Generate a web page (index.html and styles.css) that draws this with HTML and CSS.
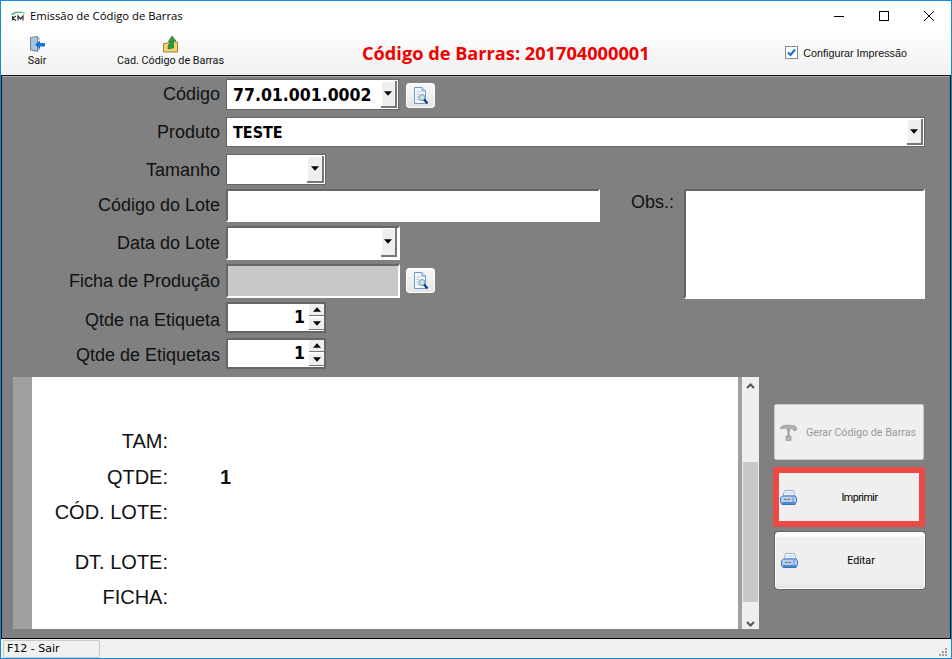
FILE: index.html

```html
<!DOCTYPE html>
<html>
<head>
    <title>Emissão de Código de Barras</title>
    <link rel="stylesheet" href="styles.css">
</head>
<body>
<!-- icons used more than once -->
<svg class="defs" width="0" height="0">
    <symbol id="ico-lookup" viewBox="0 0 16 18">
        <path d="M1.5 .5H9L12.5 4V16.5H1.5Z" fill="#f4f8fc" stroke="#6a9bd0"/>
        <path d="M9 .5V4H12.5" fill="#cfe0f2" stroke="#6a9bd0"/>
        <path d="M3.5 5H8M3.5 7.5H6M3.5 10H6M3.5 12.5H6" stroke="#b5c4d4"/>
        <circle cx="9" cy="10.5" r="3" fill="#bfe6ee" stroke="#7f9aa5"/>
        <path d="M11 12.5L14.5 16.5" stroke="#12359c" stroke-width="2.2"/>
    </symbol>
    <symbol id="ico-print" viewBox="0 0 17 15">
        <path d="M4.5 .5H13.500L15 6H3Z" fill="#fff" stroke="#8fb2da"/>
        <path d="M5.500 2.500H13M5 4H13.500" stroke="#ccd9e8"/>
        <path d="M2.500 6H15L16.500 8V11.500L15 14.500H2L.5 12.500V8Z" fill="#b4d0ee" stroke="#3a74c0"/>
        <path d="M1.500 12H16V14H2.500Z" fill="#4f88d0"/>
        <path d="M13 7V14" stroke="#5f94d6"/>
        <path d="M4 9.500H7" stroke="#2a9a3a"/>
        <path d="M8 9.500H10" stroke="#d03030"/>
    </symbol>
    <symbol id="ico-arrow" viewBox="0 0 8 4.500">
        <path d="M0 0H8L4 4.500Z" fill="#000"/>
    </symbol>
</svg>

<div class="window">
    <!-- title bar -->
    <div class="titlebar">
        <svg class="logo" width="17" height="10" viewBox="0 0 17 10">
            <path d="M.5 4C3 -.5 12 -.5 16.500 2.500C11 1.500 5 1.500 3 4Z" fill="#6fb58a"/>
            <path d="M2.500 5V9.500M2.500 7.200L6 5M2.500 7.200L6 9.500M8 9.500V5L10.500 8L13 5V9.500" fill="none" stroke="#333" stroke-width="1.200"/>
        </svg>
        <span class="win-title">Emissão de Código de Barras</span>
        <div class="win-btns">
            <svg width="10" height="10" viewBox="0 0 10 10"><path d="M0 5.5H10" stroke="#000"/></svg>
            <svg width="10" height="10" viewBox="0 0 10 10"><rect x=".5" y=".5" width="9" height="9" fill="none" stroke="#000"/></svg>
            <svg width="10" height="10" viewBox="0 0 10 10"><path d="M0 0L10 10M10 0L0 10" stroke="#000"/></svg>
        </div>
    </div>

    <!-- toolbar -->
    <div class="toolbar">
        <div class="tool tool-sair">
            <svg width="17" height="17" viewBox="0 0 17 17">
                <path d="M1.5 1.5L8.5 .5V15.5L1.5 14Z" fill="#aac4e0" stroke="#6c7fa0"/>
                <path d="M8.5 2H10V4M8.5 14H10V12" fill="none" stroke="#8a9ab0"/>
                <path d="M6 8.5L11 4.5V7H16V10.5H11V13Z" fill="#1670d8"/>
            </svg>
            <span>Sair</span>
        </div>
        <div class="tool tool-cad">
            <svg width="17" height="18" viewBox="0 0 17 18">
                <path d="M1.5 8.5H5L6 7H15.5V17H1.5Z" fill="#f3d27a" stroke="#a8842c"/>
                <path d="M6 14C6 10 7 7.5 9 6.5H6.5L10 1L14 6H11.5V13Z" fill="#2f9a35" stroke="#1c6e22" stroke-width=".6"/>
            </svg>
            <span>Cad. Código de Barras</span>
        </div>
        <h1 class="barcode-title">Código de Barras: 201704000001</h1>
        <label class="config">
            <svg width="13" height="13" viewBox="0 0 13 13">
                <rect x=".5" y=".5" width="12" height="12" fill="#fff" stroke="#8a8a8a"/>
                <path d="M3 6.5L5.5 9L10 3.5" fill="none" stroke="#0a6fd0" stroke-width="2"/>
            </svg>
            <span>Configurar Impressão</span>
        </label>
    </div>

    <!-- main panel -->
    <div class="panel">
        <div class="form">
            <label class="lbl">Código</label>
            <div class="field-line">
                <div class="combo combo-codigo"><span>77.01.001.0002</span><i class="drop"><svg width="8" height="5"><use href="#ico-arrow"/></svg></i></div>
                <button class="lookup"><svg width="16" height="18"><use href="#ico-lookup"/></svg></button>
            </div>

            <label class="lbl">Produto</label>
            <div class="combo combo-produto span-all"><span>TESTE</span><i class="drop"><svg width="8" height="5"><use href="#ico-arrow"/></svg></i></div>

            <label class="lbl down1">Tamanho</label>
            <div class="combo combo-tamanho"><span></span><i class="drop"><svg width="8" height="5"><use href="#ico-arrow"/></svg></i></div>

            <label class="lbl down1">Código do Lote</label>
            <div class="sunken lote"></div>
            <label class="lbl lbl-obs">Obs.:</label>
            <div class="sunken obs"></div>

            <label class="lbl down2">Data do Lote</label>
            <div class="sunken data"><i class="drop"><svg width="8" height="5"><use href="#ico-arrow"/></svg></i></div>

            <label class="lbl down2">Ficha de Produção</label>
            <div class="field-line">
                <div class="sunken ficha"></div>
                <button class="lookup"><svg width="16" height="18"><use href="#ico-lookup"/></svg></button>
            </div>

            <label class="lbl down3">Qtde na Etiqueta</label>
            <div class="spin">
                <span>1</span>
                <div class="spin-btns">
                    <i><svg class="up" width="8" height="5"><use href="#ico-arrow"/></svg></i>
                    <i><svg width="8" height="5"><use href="#ico-arrow"/></svg></i>
                </div>
            </div>

            <label class="lbl down2">Qtde de Etiquetas</label>
            <div class="spin">
                <span>1</span>
                <div class="spin-btns">
                    <i><svg class="up" width="8" height="5"><use href="#ico-arrow"/></svg></i>
                    <i><svg width="8" height="5"><use href="#ico-arrow"/></svg></i>
                </div>
            </div>
        </div>

        <div class="bottom">
            <!-- label preview -->
            <div class="preview">
                <div class="sheet">
                    <div class="line"><b>TAM:</b></div>
                    <div class="line"><b>QTDE:</b><em>1</em></div>
                    <div class="line"><b>CÓD. LOTE:</b></div>
                    <div class="line line-gap"><b>DT. LOTE:</b></div>
                    <div class="line"><b>FICHA:</b></div>
                </div>
                <div class="scroll">
                    <svg width="9" height="6" viewBox="0 0 9 6"><path d="M1 5L4.500 1.500L8 5" fill="none" stroke="#555" stroke-width="2"/></svg>
                    <div class="thumb"></div>
                    <svg width="9" height="6" viewBox="0 0 9 6"><path d="M1 1L4.500 4.500L8 1" fill="none" stroke="#555" stroke-width="2"/></svg>
                </div>
            </div>

            <div class="actions">
                <div class="action action-off">
                    <svg width="17" height="17" viewBox="0 0 17 17">
                        <path d="M.5 3.500C3 1 8 .5 11 1.500H14L16.500 3.500V6L14.500 7L12 4.500H10V6.500H7V4.500C5 4 3 4 .5 5Z" fill="#b0b0b0" stroke="#8c8c8c" stroke-width=".6"/>
                        <path d="M7.500 6.500H9.500V12H7.500Z" fill="#9a9a9a"/>
                        <path d="M6 12H11V16.500H6Z" fill="#b4b4b4" stroke="#8c8c8c" stroke-width=".6"/>
                    </svg>
                    <span>Gerar Código de Barras</span>
                </div>
                <div class="action action-print">
                    <svg width="17" height="15"><use href="#ico-print"/></svg>
                    <span>Imprimir</span>
                </div>
                <div class="action action-edit">
                    <svg width="17" height="15"><use href="#ico-print"/></svg>
                    <span>Editar</span>
                </div>
            </div>
        </div>
    </div>

    <!-- status bar -->
    <div class="statusbar">
        <div class="status-cell">F12 - Sair</div>
        <svg class="grip" width="10" height="10" viewBox="0 0 10 10">
            <path d="M7 1h2v2H7zM4 4h2v2H4zM7 4h2v2H7zM1 7h2v2H1zM4 7h2v2H4zM7 7h2v2H7z" fill="#a0a0a0"/>
        </svg>
    </div>
</div>
</body>
</html>
```

FILE: styles.css

```css
/* page and window frame */
* { box-sizing: border-box; }

body {
    margin: 0;
    background: #fff;
    font-family: "Liberation Sans", Arial, sans-serif;
}

.defs { position: absolute; }

.window {
    width: 952px;
    height: 659px;
    border: 1px solid #1688d8;
    display: flex;
    flex-direction: column;
    overflow: hidden;
}

/* title bar */
.titlebar {
    height: 29px;
    flex: none;
    display: flex;
    align-items: center;
    padding-left: 9px;
    background: #fff;
}

.logo { margin-right: 3px; }

.win-title {
    font-family: "Open Sans", sans-serif;
    font-size: 11.3px;
    color: #000;
}

.win-btns {
    margin-left: auto;
    display: flex;
    gap: 35px;
    padding-right: 17px;
}

/* toolbar */
.toolbar {
    height: 45px;
    flex: none;
    display: flex;
    align-items: flex-start;
    background: linear-gradient(#fff, #f0f0f0);
}

.tool {
    display: flex;
    flex-direction: column;
    align-items: center;
    font-family: "Roboto", sans-serif;
    font-size: 10.8px;
    color: #111;
    gap: 1px;
    white-space: nowrap;
}

.tool-sair {
    margin-left: 27px;
    width: 18px;
    padding-top: 6px;
}

.tool-cad {
    margin-left: 71px;
    width: 107px;
    padding-top: 5px;
}

.barcode-title {
    margin: 12px 0 0 138px;
    font-family: "Open Sans", sans-serif;
    font-size: 18.2px;
    line-height: 22px;
    font-weight: 700;
    color: #f00000;
    white-space: nowrap;
}

.config {
    margin-left: auto;
    margin-right: 44px;
    padding-top: 16px;
    display: flex;
    align-items: center;
    gap: 5px;
    font-family: "Liberation Sans", sans-serif;
    font-size: 10.8px;
    color: #111;
}

/* main panel */
.panel {
    flex: 1;
    background: #808080;
    border: 1px solid #111;
    border-bottom: 1px solid #000;
    box-shadow: inset 0 1px 0 #a8a8a8;
    min-height: 0;
    padding-top: 3px;
}

/* form: label, field, obs label, obs box */
.form {
    display: grid;
    grid-template-columns: 224px 374px 84px 241px;
    grid-template-rows: 38px 37px 35px 37px 38px 38px 36px 32px;
}

.form > * {
    align-self: start;
    grid-column: 2;
}

.form > .lbl { grid-column: 1; }

.lbl {
    font-size: 18px;
    line-height: 30px;
    color: #111;
    text-align: right;
    padding-right: 6px;
}

/* the labels do not sit on one line with their fields in every row */
.down1 { margin-top: 1px; }
.down2 { margin-top: 2px; }
.down3 { margin-top: 3px; }

.form > .lbl-obs {
    grid-column: 3;
    grid-row: 4;
    padding-right: 10px;
    line-height: 26px;
}

.field-line {
    display: flex;
    align-items: flex-start;
    gap: 7px;
}

.form > .span-all { grid-column: 2 / 5; }

/* combos */
.combo {
    height: 31px;
    background: #fff;
    border: 1px solid #666;
    display: flex;
    align-items: center;
    justify-content: space-between;
    font-family: "DejaVu Sans Condensed", "DejaVu Sans", sans-serif;
    font-weight: 700;
    font-size: 17.5px;
    color: #000;
    padding: 1px 1px 1px 6px;
}

.combo-codigo { width: 173px; }
.combo-produto { height: 30px; font-size: 16px; }
.combo-tamanho { width: 100px; }
.combo-tamanho .drop { width: 17px; }

.drop {
    width: 16px;
    align-self: stretch;
    display: flex;
    align-items: center;
    justify-content: center;
    background: #efefef;
    border-right: 2px solid #777;
    border-bottom: 2px solid #777;
    box-shadow: inset 1px 1px 0 #fff;
}

/* sunken boxes */
.sunken {
    border: 2px solid;
    border-color: #666 #fff #fff #666;
    background: #fff;
}

.lote { width: 374px; height: 33px; }

.form > .obs {
    grid-column: 4;
    grid-row: 4 / span 3;
    height: 110px;
}

.data {
    width: 174px;
    height: 34px;
    display: flex;
    justify-content: flex-end;
    padding: 0 1px 1px 0;
}

.ficha {
    width: 174px;
    height: 34px;
    background: #c8c8c8;
}

.ficha + .lookup { margin-left: -1px; }

.lookup {
    width: 29px;
    height: 25px;
    margin-top: 4px;
    padding: 0;
    border: 1px solid #fff;
    border-radius: 3px;
    background: linear-gradient(#f8f8f8, #e6e6e6);
    display: flex;
    align-items: center;
    justify-content: center;
}

/* spinners */
.spin {
    width: 100px;
    height: 31px;
    background: #fff;
    border: 2px solid #666;
    display: flex;
    justify-content: flex-end;
    font-family: "DejaVu Sans Condensed", "DejaVu Sans", sans-serif;
    font-weight: 700;
    font-size: 17.5px;
    line-height: 27px;
    color: #000;
}

.spin span { padding-right: 4px; }

.spin-btns {
    width: 15px;
    display: flex;
    flex-direction: column;
    gap: 2px;
    padding-bottom: 1px;
}

.spin-btns i {
    flex: 1;
    display: flex;
    align-items: center;
    justify-content: center;
    background: #efefef;
    border-bottom: 1px solid #777;
}

.up { transform: scaleY(-1); }

/* bottom area */
.bottom {
    display: flex;
    align-items: flex-start;
    margin-top: 7px;
    padding-left: 11px;
}

.preview {
    width: 746px;
    height: 252px;
    display: flex;
    background: #a0a0a0;
    padding-left: 19px;
}

.sheet {
    width: 706px;
    background: #fff;
    padding-top: 46px;
}

.line {
    display: flex;
    height: 35.5px;
    line-height: 36px;
    font-size: 20px;
    color: #111;
}

.line b {
    width: 136px;
    text-align: right;
    font-weight: 400;
}

.line em {
    margin-left: 52px;
    font-style: normal;
    font-weight: 700;
}

.line-gap { margin-top: 14px; }

.scroll {
    width: 17px;
    margin-left: 4px;
    background: #efefef;
    display: flex;
    flex-direction: column;
    align-items: center;
    padding-top: 6px;
}

.thumb {
    width: 15px;
    height: 140px;
    margin: 73px 0 19px;
    background: #c8c8c8;
}

/* action buttons */
.actions {
    margin-left: 14px;
    padding-top: 27px;
    display: flex;
    flex-direction: column;
}

.action {
    background: #efefef;
    display: flex;
    align-items: center;
    font-family: "Roboto", sans-serif;
    font-size: 10.7px;
    color: #000;
}

.action span {
    flex: 1;
    text-align: center;
}

.action-off {
    width: 150px;
    height: 56px;
    margin-left: 1px;
    padding-left: 5px;
    border: 1px solid #c8c8c8;
    color: #999;
    border-radius: 2px;
}

.action-off span { padding-left: 2px; }

.action-print {
    width: 152px;
    height: 60px;
    margin-top: 7px;
    padding-left: 1px;
    border: 6px solid #eb4b44;
}

.action-print span {
    letter-spacing: -.5px;
    padding-left: 3px;
}

.action-edit {
    width: 150px;
    height: 57px;
    margin: 5px 0 0 2px;
    padding-left: 5px;
    border: 1px solid #fff;
    box-shadow: 0 0 0 1px #666;
    border-radius: 3px;
    background: linear-gradient(#fff 3px, #efefef 4px, #efefef 50px, #e2e2e2);
}

/* status bar */
.statusbar {
    height: 19px;
    flex: none;
    background: #f0f0f0;
    display: flex;
    align-items: flex-end;
    justify-content: space-between;
    padding-left: 2px;
}

.status-cell {
    width: 97px;
    height: 18px;
    border: 1px solid #c8c8c8;
    border-radius: 2px;
    font-family: "DejaVu Sans", sans-serif;
    font-size: 11px;
    line-height: 16px;
    padding-left: 3px;
    color: #000;
}

.grip { margin: 0 3px 1px 0; }
```
